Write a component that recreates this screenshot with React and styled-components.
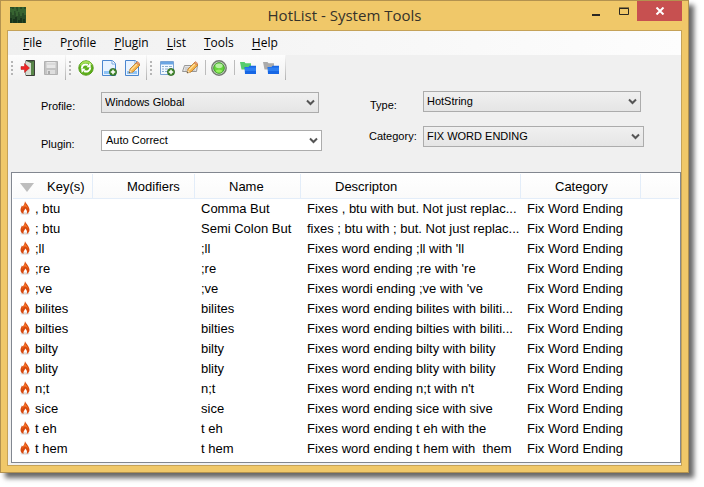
import React from 'react';
import styled, { createGlobalStyle } from 'styled-components';

const Global = createGlobalStyle`
  * { box-sizing: border-box; }
  body { margin: 0; background: #fff; color: #000; font-family: "Liberation Sans", Arial, sans-serif; }
  button, select { font: inherit; color: inherit; }
`;

const Desktop = styled.div`padding: 0 15px 15px 0;`;

const Window = styled.main`
  border: 1px solid #b3924f;
  background: #f0c869;
  padding: 0 6px 6px;
  box-shadow: 5px 5px 5px 0 rgba(0, 0, 0, 0.6);
`;

const TitleBar = styled.header`
  display: grid;
  grid-template-columns: 104px 1fr 104px;
  height: 29px;
`;
const AppIcon = styled.svg`width: 16px; height: 16px; margin: 6px 0 0 3px;`;
const Title = styled.h1`
  margin: 0;
  text-align: center;
  font: 400 15px/28px "Open Sans", "Noto Sans", sans-serif;
  color: #35322a;
`;
const WindowButtons = styled.div`display: flex; justify-content: flex-end; align-items: flex-start;`;
const WindowButton = styled.button`
  width: ${p => (p.$close ? 45 : 29)}px;
  height: 20px;
  padding: 0;
  border: 0;
  background: ${p => (p.$close ? '#c75050' : 'transparent')};
  svg { display: block; margin: auto; }
`;

const Client = styled.div`border: 1px solid #c5a258; background: #f0f0f0; padding-bottom: 2px;`;

const MenuBar = styled.nav`
  display: flex;
  gap: 18px;
  height: 24px;
  padding-left: 15px;
  background: linear-gradient(90deg, #f0f0f0, #fdfdfd);
`;
const MenuButton = styled.button`
  padding: 0;
  border: 0;
  background: none;
  font: 12px/24px "Open Sans", "Noto Sans", sans-serif;
  u { text-underline-offset: 2px; }
`;

const ToolBars = styled.div`display: flex; height: 25px;`;
const ToolStrip = styled.div`
  display: flex;
  align-items: center;
  padding: 0 3px;
  border-right: 1px solid;
  border-image: linear-gradient(#fafafa, #aeaeae) 1;
  background: linear-gradient(#fdfdfd, #f1f1f1);
`;
const Grip = styled.span`
  width: 2px;
  height: 14px;
  margin-right: 3px;
  background: repeating-linear-gradient(#b6b6b6 0 2px, transparent 2px 4px);
`;
const ToolButton = styled.button`
  display: flex;
  justify-content: center;
  width: 23px;
  padding: 0;
  border: 0;
  background: none;
  svg { display: block; flex: none; }
`;
const Divider = styled.span`
  width: 6px;
  padding-left: 4px;
  &::after { content: ""; display: block; width: 1px; height: 15px; background: #bcbcbc; }
`;

const Filters = styled.form`
  display: grid;
  grid-template-columns: 281fr 275fr;
  column-gap: 47px;
  padding: 11px 37px 21px 33px;
`;
const FilterColumn = styled.div`
  display: flex;
  flex-direction: column;
  gap: ${p => p.$gap}px;
  padding-top: ${p => p.$top || 0}px;
`;
const Field = styled.div`display: flex; padding-right: ${p => (p.$inset ? 3 : 0)}px;`;
const FieldLabel = styled.label`
  flex: none;
  width: ${p => p.$width}px;
  padding-top: ${p => (p.$low ? 7 : 3)}px;
  padding-left: ${p => (p.$indent ? 1 : 0)}px;
  font-size: 11px;
  line-height: 14px;
`;
const SelectBox = styled.div`
  position: relative;
  flex: 1;
  svg { position: absolute; right: 4px; top: 7px; pointer-events: none; }
`;
const Select = styled.select`
  display: block;
  appearance: none;
  width: 100%;
  height: 21px;
  padding: 0 20px 1px ${p => (p.$light ? 4 : 3)}px;
  border: 1px solid #acacac;
  border-radius: 0;
  background: ${p => (p.$light ? '#fff' : 'linear-gradient(#f0f0f0, #e5e5e5)')};
  font-size: 11px;
`;

const ListFrame = styled.div`
  margin-left: 3px;
  padding: 1px 1px 3px;
  border: 1px solid #828790;
  background: #fff;
`;
const List = styled.table`
  width: 100%;
  table-layout: fixed;
  border-collapse: separate;
  border-spacing: 0;
  font-size: 13px;
`;
const Col = styled.col`width: ${p => (p.$w ? p.$w + 'px' : 'auto')};`;
const Head = styled.th`
  position: relative;
  height: 25px;
  padding: 1px 0 0 34px;
  border-right: ${p => (p.$last ? 0 : 1)}px solid #e3edf9;
  border-bottom: 1px solid #e3edf9;
  background: linear-gradient(#fff, #fafafa);
  font-weight: 400;
  text-align: left;
  svg { position: absolute; left: 7px; top: 9px; }
`;
const Cell = styled.td`
  height: 20px;
  padding: 0 0 0 6px;
  white-space: pre;
  line-height: 20px;
`;
const KeyCell = styled(Cell)`
  padding-left: 7px;
  svg { display: inline-block; vertical-align: -2px; margin-right: 5px; }
`;

const Pencil = () => (
  <g>
    <path d="M5 13l1-4 7-7 3 3-7 7z" fill="#f5b44b" stroke="#b87827" strokeWidth=".8" />
    <path d="M7 10l7-7" stroke="#ffe09a" strokeWidth="1.2" />
    <path d="M12 3l1.6-1.6 2.2 2.2L14.500 5z" fill="#e79a6a" stroke="#bd7047" strokeWidth=".5" />
    <path d="M5 13l.8-3 2.200 2.200z" fill="#f8e3bd" /><path d="M5 13l.4-1.500 1.100 1.100z" fill="#333" />
  </g>
);
const Plus = () => (
  <g><circle cx="12" cy="12" r="3.600" fill="#458a2e" stroke="#24601c" strokeWidth=".7" /><path d="M12 9.800v4.400M9.800 12h4.400" stroke="#fff" strokeWidth="1.500" /></g>
);
const Page = () => (
  <g><path d="M1.500 .5h10l3 3v12h-13z" fill="#e8f3ff" stroke="#4a86cf" /><path d="M11 .5V4h3.500" fill="#fff" stroke="#7ba9df" /><path d="M3 11h10v3H3z" fill="#8fc4f5" /></g>
);
const Folders = ({ back }) => (
  <g>
    <path d="M0 2h4.500l1 1.200H11v6.300H1.500z" fill={back} />
    <path d="M4.500 7h4l1-1.200H16V14H5z" fill="#1767e5" /><path d="M5 7.500h11v3.500H5z" fill="#2d7ff2" />
  </g>
);

const icons = {
  exit: <g><path d="M6 .5h8.500v15H6z" fill="#46683d" stroke="#3c3f39" /><path d="M6 1l5 2v12H6z" fill="#d7ddd2" /><path d="M11 3l3-2v14h-3z" fill="#5a874a" /><path d="M1 6.500h3.500V3.500L9.500 8l-5 4.500v-3H1z" fill="#ee2424" stroke="#b31818" strokeWidth=".5" /></g>,
  save: <g><path d="M1.500 1.500h13v13h-13z" fill="#c4c4c4" stroke="#b2b2b2" /><path d="M3.500 2h9v6h-9z" fill="#e8e8e8" /><path d="M4 10h8v4H4z" fill="#dedede" /><path d="M5 11h2v3H5z" fill="#aaa" /><path d="M4 4h8" stroke="#ccc" /></g>,
  refresh: <g><circle cx="8" cy="8" r="7.200" fill="#5cae18" stroke="#559d1a" /><path d="M2.800 5.500a5.800 5.800 0 0 1 10.400-.5" fill="none" stroke="#a3df55" strokeWidth="2" /><path d="M3.700 8.500C4 5 7 3.600 10 5" fill="none" stroke="#fff" strokeWidth="2" /><path d="M8.500 7.200l4.300.2-.5-4.300zM7.500 8.800l-4.300-.2.500 4.300z" fill="#fff" /><path d="M12.300 7.500C12 11 9 12.400 6 11" fill="none" stroke="#fff" strokeWidth="2" /></g>,
  add: <g><Page /><Plus /></g>,
  edit: <g><Page /><Pencil /></g>,
  table: <g><path d="M1.500 1.500h13v13h-13z" fill="#f3f9ff" stroke="#7aa4d5" /><path d="M2 2h12v2.500H2z" fill="#6aa5e3" /><path d="M3 6.500h2m1 0h3m1 0h3M3 9h2m1 0h3m1 0h3M3 11.500h2m1 0h3" stroke="#8aadd0" /><Plus /></g>,
  rename: <g><path d="M2.500 5.500h13l-1 6H.5z" fill="#e4e4e4" stroke="#999" /><path d="M3 10h10M3 8h10" stroke="#bbb" /><Pencil /></g>,
  orb: <g><circle cx="8" cy="8" r="7.200" fill="#d4ddd0" stroke="#737b70" strokeWidth="1.400" /><circle cx="8" cy="8" r="5.300" fill="#66d63c" stroke="#3f9a2c" /><ellipse cx="8" cy="5.800" rx="3.600" ry="2.400" fill="#b7f0a2" /><ellipse cx="8" cy="11" rx="3" ry="1.500" fill="#98f15d" /></g>,
  enable: <Folders back="#55cc6e" />,
  disable: <Folders back="#ababab" />,
};

const Tool = ({ name, label }) => (
  <ToolButton type="button" aria-label={label}>
    <svg width="16" height="16" viewBox="0 0 16 16">{icons[name]}</svg>
  </ToolButton>
);

const Flame = () => (
  <svg width="10" height="14" viewBox="0 0 10 14" aria-hidden="true">
    <ellipse cx="5" cy="12.500" rx="4.500" ry="1.200" fill="#ddd" />
    <path d="M5 0C5.300 2.400 9.500 5 9.500 8.800c0 2-1.200 3.500-2.800 4.100.8-2 .2-3.900-1.500-5.500C5 9 3 10 3.600 12.900 1.700 12.300.5 10.800.5 9c0-2 1.200-3 1.300-4.500l1 1C4.200 4 4.900 2.200 5 0z" fill="#d8480d" />
    <path d="M5 1.500C5.200 4 8 5.400 8.300 8 7.500 6.500 6 5.500 5 5.500S2.500 7 1.800 8.500C1.900 6.500 4.800 5 5 1.500z" fill="#f57328" />
  </svg>
);

const Dropdown = ({ id, label, value, width, low, indent, inset, light }) => (
  <Field $inset={inset}>
    <FieldLabel htmlFor={id} $width={width} $low={low} $indent={indent}>{label}</FieldLabel>
    <SelectBox>
      <Select id={id} $light={light} defaultValue={value}><option>{value}</option></Select>
      <svg width="9" height="7" viewBox="0 0 9 7"><path d="M1 1.500l3.500 3.500L8 1.500" fill="none" stroke="#555" strokeWidth="2" /></svg>
    </SelectBox>
  </Field>
);

const menus = [['', 'F', 'ile'], ['P', 'r', 'ofile'], ['', 'P', 'lugin'], ['', 'L', 'ist'], ['', 'T', 'ools'], ['', 'H', 'elp']];

const rows = [
  [', btu', 'Comma But', 'Fixes , btu with but. Not just replac...'],
  ['; btu', 'Semi Colon But', 'fixes ; btu with ; but. Not just replac...'],
  [';ll', ';ll', "Fixes word ending ;ll with 'll"],
  [';re', ';re', "Fixes word ending ;re with 're"],
  [';ve', ';ve', "Fixes wordi ending ;ve with 've"],
  ['bilites', 'bilites', 'Fixes word ending bilites with biliti...'],
  ['bilties', 'bilties', 'Fixes word ending bilties with biliti...'],
  ['bilty', 'bilty', 'Fixes word ending bilty with bility'],
  ['blity', 'blity', 'Fixes word ending blity with bility'],
  ['n;t', 'n;t', "Fixes word ending n;t with n't"],
  ['sice', 'sice', 'Fixes word ending sice with sive'],
  ['t eh', 't eh', 'Fixes word ending t eh with the'],
  ['t hem', 't hem', 'Fixes word ending t hem with  them'],
];

export default function App() {
  return (
    <Desktop>
      <Global />
      <Window>
        <TitleBar>
          <AppIcon viewBox="0 0 16 16">
            <path d="M0 0h16v16H0z" fill="#294c27" />
            <path d="M1 1v4m2-3v6m2-8v4m2 0v5m2-9v5m2-3v7m2-9v6m2-4v6" stroke="#477c3d" />
            <path d="M2 3v3m4-4v4m4-2v3m4-5v3" stroke="#386532" />
            <path d="M1 11v5m3-4v4m2-6v6m3-3v3m2-5v5m3-4v4" stroke="#0d1e12" />
          </AppIcon>
          <Title>HotList - System Tools</Title>
          <WindowButtons>
            <WindowButton type="button" aria-label="Minimize"><svg width="12" height="12"><path d="M4 9h8v2H4z" fill="#2b2822" /></svg></WindowButton>
            <WindowButton type="button" aria-label="Maximize"><svg width="12" height="12"><path d="M2.500 3.500h9v6h-9zM2 3h10" fill="none" stroke="#2b2822" /></svg></WindowButton>
            <WindowButton type="button" aria-label="Close" $close><svg width="10" height="8"><path d="M1.500 .5l7 7m0-7l-7 7" stroke="#fff" strokeWidth="2" /></svg></WindowButton>
          </WindowButtons>
        </TitleBar>
        <Client>
          <MenuBar>
            {menus.map(([a, key, b]) => <MenuButton type="button" key={key + b}>{a}<u>{key}</u>{b}</MenuButton>)}
          </MenuBar>
          <ToolBars>
            <ToolStrip><Grip /><Tool name="exit" label="Exit" /><Tool name="save" label="Save" /></ToolStrip>
            <ToolStrip><Grip /><Tool name="refresh" label="Refresh" /><Tool name="add" label="Add profile" /><Tool name="edit" label="Edit profile" /></ToolStrip>
            <ToolStrip>
              <Grip /><Tool name="table" label="Add entry" /><Tool name="rename" label="Edit entry" />
              <Divider /><Tool name="orb" label="Status" />
              <Divider /><Tool name="enable" label="Enable" /><Tool name="disable" label="Disable" />
            </ToolStrip>
          </ToolBars>
          <Filters>
            <FilterColumn $gap={17} $top={1}>
              <Dropdown id="profile" label="Profile:" value="Windows Global" width={60} low inset />
              <Dropdown id="plugin" label="Plugin:" value="Auto Correct" width={60} low light />
            </FilterColumn>
            <FilterColumn $gap={14}>
              <Dropdown id="type" label="Type:" value="HotString" width={54} low indent inset />
              <Dropdown id="category" label="Category:" value="FIX WORD ENDING" width={54} />
            </FilterColumn>
          </Filters>
          <ListFrame>
            <List>
              <colgroup><Col $w={80} /><Col $w={102} /><Col $w={106} /><Col $w={220} /><Col $w={120} /><Col /></colgroup>
              <thead>
                <tr>
                  <Head><svg width="14" height="9"><path d="M0 0h14L7 9z" fill="#bdbdbd" /></svg>Key(s)</Head>
                  <Head>Modifiers</Head>
                  <Head>Name</Head>
                  <Head>Descripton</Head>
                  <Head>Category</Head>
                  <Head $last />
                </tr>
              </thead>
              <tbody>
                {rows.map(([key, name, text]) => (
                  <tr key={key}>
                    <KeyCell><Flame />{key}</KeyCell><Cell /><Cell>{name}</Cell><Cell>{text}</Cell><Cell>Fix Word Ending</Cell><Cell />
                  </tr>
                ))}
              </tbody>
            </List>
          </ListFrame>
        </Client>
      </Window>
    </Desktop>
  );
}
